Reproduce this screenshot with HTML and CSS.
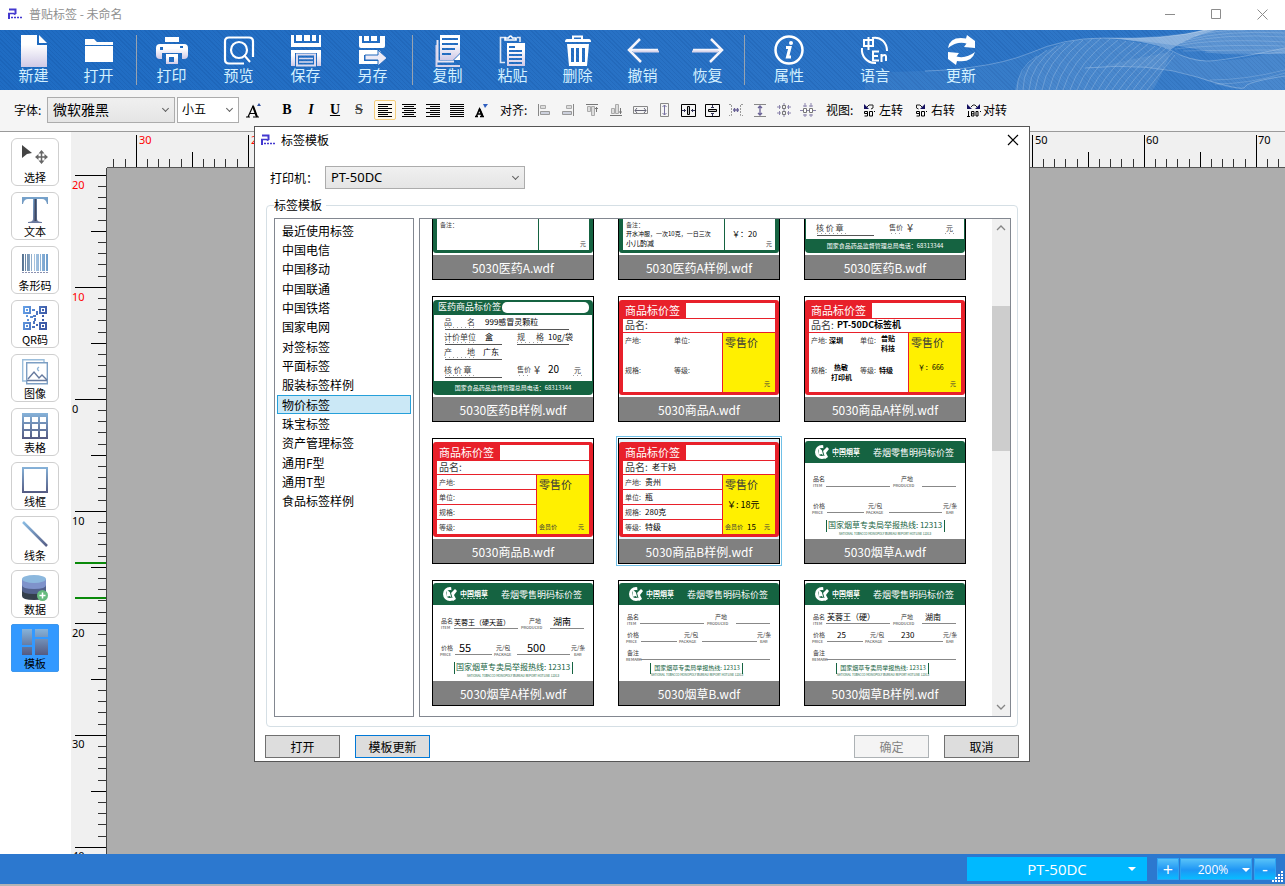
FILE: index.html
```html
<!DOCTYPE html>
<html lang="zh-CN">
<head>
<meta charset="utf-8">
<title>普贴标签 - 未命名</title>
<link rel="stylesheet" href="styles.css">
</head>
<body>
<svg class="defs" width="0" height="0" aria-hidden="true">
  <defs>
    <linearGradient id="g-white" x1="0" y1="0" x2="0" y2="1"><stop offset="0.3" stop-color="#ffffff"/><stop offset="1" stop-color="#cfc9e6"/></linearGradient>
    <linearGradient id="g-steel" x1="0" y1="0" x2="0" y2="1"><stop offset="0" stop-color="#86b3da"/><stop offset="1" stop-color="#545a82"/></linearGradient>
    <linearGradient id="g-tee" x1="0" y1="0" x2="0" y2="1"><stop offset="0" stop-color="#76a3cc"/><stop offset="1" stop-color="#6b7a9e"/></linearGradient>
    <linearGradient id="g-bars" x1="0" y1="0" x2="1" y2="0"><stop offset="0" stop-color="#54708f"/><stop offset="0.5" stop-color="#a9c6e2"/><stop offset="1" stop-color="#6b9bcb"/></linearGradient>
    <linearGradient id="g-qr" x1="0" y1="0" x2="1" y2="0.3"><stop offset="0" stop-color="#66a3ea"/><stop offset="1" stop-color="#3d59a6"/></linearGradient>
    <linearGradient id="g-line" gradientUnits="userSpaceOnUse" x1="0" y1="0" x2="26" y2="26"><stop offset="0" stop-color="#8cc0e8"/><stop offset="1" stop-color="#545a82"/></linearGradient>
  </defs>
  <symbol id="logo" viewBox="0 0 14 12">
    <path d="M1 1.500h6.500V6" fill="none" stroke="#4338cf" stroke-width="2"/>
    <path d="M0 5.500h5.500l2 1" fill="none" stroke="#4338cf" stroke-width="1.500"/>
    <path d="M1 6v5" stroke="#4338cf" stroke-width="2"/>
    <path d="M3 9.500h2M6 9.500h2M9 9.500h2M12 9.500h2" stroke="#4338cf" stroke-width="1.500"/>
  </symbol>
  <symbol id="f-red" viewBox="0 0 160 100">
    <rect y="3" width="160" height="95" rx="3" fill="#e8202a"/>
    <path d="M67 6h89v15H67zM4 22h152v13H4zM4 36h99v59H4z" fill="#fff"/>
    <rect x="104" y="36" width="52" height="59" fill="#fff000"/>
  </symbol>
  <symbol id="f-med-a" viewBox="0 0 160 100">
    <rect y="3" width="160" height="95" rx="3" fill="#156341"/>
    <path d="M4 6h101v89H4zM106 6h50v89h-50z" fill="#fff"/>
  </symbol>
  <symbol id="f-med-b" viewBox="0 0 160 100">
    <rect y="3" width="160" height="95" rx="4" fill="#156341"/>
    <path d="M1 18h158v66H1z" fill="#fff"/>
    <rect x="69" y="5" width="87" height="11" rx="5" fill="#fff"/>
    <path d="M12 32.500h124M12 47.500h57M84 47.500h52M12 62.500h57M12 80.500h57" stroke="#555" fill="none"/>
    <path d="M12 30.500h29M12 45.500h29M84 45.500h26M12 60.500h29M12 78.500h30M86 78.500h12M140 78.500h10" stroke="#777" stroke-dasharray="1 3" fill="none" opacity=".7"/>
  </symbol>
  <symbol id="f-tob" viewBox="0 0 160 100">
    <path d="M0 24V5q0-3 3-3h154q3 0 3 3v19z" fill="#156341"/>
    <circle cx="17" cy="13" r="5.500" fill="none" stroke="#fff" stroke-width="3"/>
    <path d="M18 3l9 6-1 10-7-1z" fill="#156341"/>
    <path d="M14 9l4 3 4-4 2 2-3 4 2 4-3 2-3-5-4 1z" fill="#fff"/>
    <path d="M17 10l2 7" stroke="#156341" fill="none"/>
    <path d="M28 17.500h26" stroke="#fff" stroke-dasharray="2 1" opacity=".6"/>
  </symbol>
</svg>

<header class="titlebar">
  <svg class="logo"><use href="#logo"/></svg>
  <h1 class="titlebar-text">普贴标签 - 未命名</h1>
  <button class="win-btn" aria-label="最小化"><svg width="11" height="11"><path d="M0 5.500h10" stroke="#8c8c8c"/></svg></button>
  <button class="win-btn" aria-label="最大化"><svg width="11" height="11"><path d="M.5.5h9v9h-9z" fill="none" stroke="#8c8c8c"/></svg></button>
  <button class="win-btn" aria-label="关闭"><svg width="11" height="11"><path d="M.5.5l10 10M10.500.5l-10 10" stroke="#8c8c8c"/></svg></button>
</header>

<nav class="toolbar">
  <svg class="waves" viewBox="0 0 420 60" aria-hidden="true">
    <path d="M0 42Q70 42 108 37 140 33 165 23 198 8 238 8 290 8 338 0H420V60H0z" fill="#fff" opacity=".05"/>
    <path d="M150 60Q155 30 198 13 215 8 238 8 280 12 306 20 300 40 288 60z" fill="#fff" opacity=".09"/>
    <path d="M238 8Q300 10 338 0H420V24Q380 24 345 22 300 12 238 8z" fill="#fff" opacity=".18"/>
    <path d="M238 8Q300 10 338 0H352Q325 6 305 20 280 10 238 8z" fill="#fff" opacity=".3"/>
    <path d="M240 36Q290 34 332 47 362 60 385 60H420V18Q380 32 342 31 320 27 305 22 260 30 240 36z" fill="#fff" opacity=".08"/>
    <g fill="none" stroke="#fff" opacity=".25">
      <path d="M60 41Q90 40 108 37 140 33 165 23 198 8 238 8 300 10 342 0M220 38Q285 32 332 47T380 57T420 46M305 20Q325 31 342 31T420 18"/>
    </g>
    <g fill="none" stroke="#fff" opacity=".2">
      <path d="M152 60Q152 38 172 26M158 60Q158 34 182 20M164 60Q166 34 192 16M170 60Q174 33 200 13M177 60Q182 32 209 11M184 60Q190 32 218 10M191 60Q198 32 227 9M198 60Q206 32 236 8M205 60Q214 32 245 9M212 60Q222 33 253 10M219 60Q230 34 261 11M226 60Q238 35 269 12M233 60Q246 36 276 13M240 60Q254 36 283 14M247 60Q262 37 290 16M254 60Q270 37 296 17M261 60Q277 38 301 18M268 60Q284 38 305 20M275 60Q291 40 308 22M282 60Q296 42 310 25"/>
    </g>
    <g fill="none" stroke="#fff" opacity=".16">
      <path d="M330 6Q350 0 380 0M322 10Q360 0 420 3M316 13Q360 3 420 7M312 16Q350 8 420 12M310 19Q350 14 420 16M318 21Q360 20 420 20M340 22Q380 26 420 22M345 50Q380 50 420 40M350 54Q385 54 420 43"/>
    </g>
  </svg>
  <div class="tool-group">
    <button class="tool"><svg class="tool-icon"><path d="M3 0h16v10h10v22H3z" fill="url(#g-white)"/><path d="M21 0l8 8h-8z" fill="#fff"/></svg>新建</button>
    <button class="tool"><svg class="tool-icon"><path d="M2 4h9l3 3h16v3H2z" fill="#fff"/><path d="M2 11h28v16H2z" fill="#fff"/></svg>打开</button>
  </div>
  <div class="tool-group tool-group-wide">
    <button class="tool"><svg class="tool-icon"><path d="M9 2h14v5H9z" fill="#fff"/><path fill-rule="evenodd" d="M4 9h24q4 0 4 4v7q0 4-4 4h-2v-6H6v6H4q-4 0-4-4v-7q0-4 4-4zm20 2v2h3v-2zM4 12v3h3v-3z" fill="url(#g-white)"/><path fill-rule="evenodd" d="M10 19h12v10H10zm3 3v5h5v-5z" fill="url(#g-white)"/></svg>打印</button>
    <button class="tool"><svg class="tool-icon"><path d="M11 28.500H6q-4 0-4-4V6.500q0-4 4-4h20q4 0 4 4V22" fill="none" stroke="#fff" stroke-width="2.200"/><path d="M11 28.500h10" stroke="#fff" stroke-width="2"/><circle cx="16" cy="15" r="8" fill="none" stroke="#fff" stroke-width="2.200"/><path d="M21 20l6 7" stroke="#fff" stroke-width="2"/></svg>预览</button>
    <button class="tool"><svg class="tool-icon"><path d="M1 0h3v8h25V0h2v12H1z" fill="#fff"/><path d="M6 0h6v6H6zM14 0h6v6h-6zM22 0h4v6h-4z" fill="#fff"/><path d="M1 15h30v16h-4V18H5v13H1z" fill="url(#g-white)"/><path d="M7 19.500h18v11H7z" fill="none" stroke="#dedbee" stroke-width="2"/><path d="M9 23.500h14M9 27h14" stroke="#dedbee" stroke-width="1.500"/></svg>保存</button>
    <button class="tool"><svg class="tool-icon"><path d="M2 1h3v7h18V1h5v10q0 2-2 2H4q-2 0-2-2z" fill="#fff"/><path d="M7 1h5v5H7zM14 1h6v5h-6z" fill="#fff"/><path d="M2 15h20l2 2v3H7v6h15v3H2z" fill="#fff"/><path d="M8 20h13v-5l9 8-9 8v-6H8z" fill="#eceaf6" stroke="#2068bd" stroke-width="1"/></svg>另存</button>
  </div>
  <div class="tool-group tool-group-edit">
    <button class="tool"><svg class="tool-icon"><path d="M5.500 5v21.500H22" fill="none" stroke="#e8e6f4" stroke-width="2"/><path d="M4.500 10v21H28" fill="none" stroke="#d8d4ea" stroke-width="2"/><path fill-rule="evenodd" d="M8 0h20v18l-7 7H8zM10 3v2h16V3zm0 5v2h16V8zm0 5v2h13v-2zm0 5v2h9v-2z" fill="url(#g-white)"/><path d="M22 25l6-6v6z" fill="#fff"/></svg>复制</button>
    <button class="tool"><svg class="tool-icon"><path d="M8 27.500H3.500V2.500H9M20 2.500h3V7" fill="none" stroke="#dfe7f4" stroke-width="1.600"/><path d="M8 5h11V3h-3.500q-2-4-4 0H8z" fill="none" stroke="#fff" stroke-width="1.600"/><path fill-rule="evenodd" d="M10 8h18v23H10zM12 11v2h6v-2zm0 4v2h13v-2zm0 4v2h13v-2zm0 4v2h13v-2zm0 4v2h13v-2z" fill="url(#g-white)"/></svg>粘贴</button>
    <button class="tool"><svg class="tool-icon"><path d="M5 4h22q2 0 2 3H3q0-3 2-3z" fill="#fff"/><path d="M11 4V1.500h9V4" fill="none" stroke="#fff" stroke-width="2"/><path fill-rule="evenodd" d="M5 9h22l-2 22H7zM9 13v14h3V13zm5 0v14h3V13zm6 0v14h3V13z" fill="#fff"/></svg>删除</button>
    <button class="tool"><svg class="tool-icon"><path d="M13 4L2 15l12 12M2 15h29" fill="none" stroke="#f4f4fb" stroke-width="2.500"/><path d="M6 16.500h26" stroke="#d9d5ea" stroke-width="2"/></svg>撤销</button>
    <button class="tool"><svg class="tool-icon"><path d="M19 4l11 11-12 12M30 15H1" fill="none" stroke="#f4f4fb" stroke-width="2.500"/><path d="M0 16.500h26" stroke="#d9d5ea" stroke-width="2"/></svg>恢复</button>
  </div>
  <div class="tool-group tool-group-last">
    <button class="tool"><svg class="tool-icon"><circle cx="16" cy="15" r="13.500" fill="none" stroke="#fff" stroke-width="2.500"/><circle cx="18" cy="8" r="2" fill="#fff"/><path d="M13 12.500h4l-2.500 9.500h3.500" fill="none" stroke="#fff" stroke-width="3"/></svg>属性</button>
    <button class="tool"><svg class="tool-icon"><path d="M13 3c9-2 15 5 15 13M3 13c-1 8 5 15 13 15h1" fill="none" stroke="#fff" stroke-width="2"/><path d="M5 5h9v6H5zM9.500 2v13" fill="none" stroke="#fff" stroke-width="2"/><path d="M20 16.500h-6v9h6M14 21h5M22.500 27v-8M22.500 21.500q4-3 4.500 0V26" fill="none" stroke="#fff" stroke-width="2"/></svg>语言</button>
    <button class="tool"><svg class="tool-icon"><path d="M3 13Q5 1 21 3.500L22 0l8 6v7l-11-1 2.500-3.500Q12 6 3 13z" fill="#fff"/><path d="M30 17q-3 11-18 9l-1 4-8-6v-7l11 1-2.500 3.500Q21 24 30 17z" fill="#fff"/></svg>更新</button>
  </div>
</nav>

<section class="format-bar" aria-label="格式">
  <label class="fmt-label" for="font-family">字体:</label>
  <span class="pick pick-font"><select id="font-family"><option>微软雅黑</option></select></span>
  <span class="pick pick-size"><select aria-label="字号"><option>小五</option></select></span>
  <button class="fmt fmt-grow" aria-label="增大字号"><svg class="fi"><path d="M1 15h4M8 15h6M3 15L8 4l4 11M4.500 11.500h6" fill="none" stroke="#000" stroke-width="1.200"/><path d="M8 4l4 11" stroke="#000" stroke-width="2"/><path d="M12 4l2-3 2 3z" fill="#2f4fa0"/></svg></button>
  <button class="fmt fmt-bold" aria-label="粗体">B</button>
  <button class="fmt fmt-italic" aria-label="斜体">I</button>
  <button class="fmt fmt-under" aria-label="下划线">U</button>
  <button class="fmt fmt-strike" aria-label="删除线">S</button>
  <button class="fmt fmt-on" aria-label="左对齐"><svg class="fi"><path d="M1 2.500h14M1 4.500h10M1 6.500h14M1 8.500h10M1 10.500h14M1 12.500h10M1 14.500h14" stroke="#000"/></svg></button>
  <button class="fmt" aria-label="居中"><svg class="fi"><path d="M1 2.500h14M3 4.500h10M1 6.500h14M3 8.500h10M1 10.500h14M3 12.500h10M1 14.500h14" stroke="#000"/></svg></button>
  <button class="fmt" aria-label="右对齐"><svg class="fi"><path d="M1 2.500h14M5 4.500h10M1 6.500h14M5 8.500h10M1 10.500h14M5 12.500h10M1 14.500h14" stroke="#000"/></svg></button>
  <button class="fmt" aria-label="两端对齐"><svg class="fi"><path d="M1 2.500h14M1 4.500h14M1 6.500h14M1 8.500h14M1 10.500h14M1 12.500h14M1 14.500h14" stroke="#000"/></svg></button>
  <button class="fmt" aria-label="文字方向"><svg class="fi"><path d="M2 14.500h3M7 14.500h4M3.500 14l3-7 3 7M4.500 12h4" fill="none" stroke="#000" stroke-width="1.500"/><path d="M6.500 7l3 7" stroke="#000" stroke-width="2"/><path d="M10 2h5l-3 4z" fill="#2f5fc0"/></svg></button>
  <span class="fmt-label fmt-label-align">对齐:</span>
  <button class="fmt" aria-label="靠左"><svg class="fi"><path d="M2.500 2v12" stroke="#888"/><path d="M4.500 3.500h5v3h-5z" fill="#ddd" stroke="#aaa"/><path d="M4.500 9.500h9v3h-9z" fill="#ccd0dc" stroke="#999"/></svg></button>
  <button class="fmt" aria-label="靠右"><svg class="fi"><path d="M13.500 2v12" stroke="#888"/><path d="M6.500 3.500h5v3h-5z" fill="#ddd" stroke="#aaa"/><path d="M2.500 9.500h9v3h-9z" fill="#ccd0dc" stroke="#999"/></svg></button>
  <button class="fmt" aria-label="靠上"><svg class="fi"><path d="M2 2.500h12" stroke="#777"/><path d="M3.500 4.500h3v5h-3zM7.500 4.500h3v9h-3z" fill="#ddd" stroke="#aaa"/><path d="M12.500 5v5M11 6.500h3" stroke="#777"/></svg></button>
  <button class="fmt" aria-label="靠下"><svg class="fi"><path d="M2 13.500h12" stroke="#777"/><path d="M3.500 6.500h3v5h-3zM7.500 2.500h3v9h-3z" fill="#ddd" stroke="#aaa"/><path d="M12.500 6v6M11 10h3" stroke="#777"/></svg></button>
  <button class="fmt" aria-label="等宽"><svg class="fi"><path d="M1.500 4.500h14v7h-14z" fill="none" stroke="#888"/><path d="M3 8.500h11M5 6L3 8.500 5 11M12 6l2 2.500-2 2.500" fill="none" stroke="#667"/></svg></button>
  <button class="fmt" aria-label="等高"><svg class="fi"><path d="M4.500 1.500h8v13h-8z" fill="none" stroke="#888"/><path d="M8.500 3v10M6.500 5l2-2 2 2M6.500 11l2 2 2-2" fill="none" stroke="#7670a0"/></svg></button>
  <button class="fmt" aria-label="水平居中"><svg class="fi"><path d="M1.500 2.500h14v12h-14z" fill="none" stroke="#000" stroke-width="1"/><path d="M7.500 4.500h2v8h-2z" fill="#ccc" stroke="#000"/><path d="M2 8.500h4M15 8.500h-4M4.500 7v3M12.500 7v3" stroke="#335"/></svg></button>
  <button class="fmt" aria-label="垂直居中"><svg class="fi"><path d="M1.500 2.500h14v12h-14z" fill="none" stroke="#000" stroke-width="1"/><path d="M4.500 7.500h8v2h-8z" fill="#ccc" stroke="#000"/><path d="M8.500 3v3M8.500 14v-3M7 5.500h3M7 11.500h3" stroke="#335"/></svg></button>
  <button class="fmt" aria-label="水平等距"><svg class="fi"><path d="M1 2.500h2.500v11H1M15 2.500h-2.500v11H15" fill="none" stroke="#999" stroke-dasharray="2 1"/><path d="M5 8h6M6.500 6v4M9.500 6v4" stroke="#6a6296" stroke-width="1.300"/></svg></button>
  <button class="fmt" aria-label="垂直等距"><svg class="fi"><path d="M2 2.500h12M2 14.500h12" stroke="#888"/><path d="M8 4v9M6 6l2-2 2 2M6 11l2 2 2-2" fill="none" stroke="#6a6296" stroke-width="1.300"/></svg></button>
  <button class="fmt" aria-label="中心对齐"><svg class="fi"><path d="M6.500 3.500h3v3h-3zM6.500 9.500h3v3h-3z" fill="#eee" stroke="#777"/><path d="M1 5h4M11 5h4M1 11h4M11 11h4M3.500 3v4M12.500 3v4M3.500 9v4M12.500 9v4M8 1v2M8 7v2M8 13v2" stroke="#8b84ad"/></svg></button>
  <button class="fmt" aria-label="中心等距"><svg class="fi"><path d="M3.500 6.500h3v4h-3zM9.500 6.500h3v4h-3z" fill="#fff" stroke="#777"/><path d="M0 8.500h3M7 8.500h2M13 8.500h3M5 1v4M11 1v4M5 12v3M11 12v3M3 4h4M9 4h4M3 13h4M9 13h4" stroke="#8b84ad"/></svg></button>
  <span class="fmt-label fmt-label-view">视图:</span>
  <button class="turn"><svg class="turn-icon" viewBox="0 0 14 13"><path d="M1 0v5h5z" fill="#141060"/><path d="M4 3L6 1h4v3L8 5" fill="none" stroke="#222"/><path d="M4.500 9.500h-3v-2h3v4.500h-3M6.500 7.500h3V12h-3z" fill="none" stroke="#000"/><path d="M11 7h1v1h-1z"/></svg>左转</button>
  <button class="turn"><svg class="turn-icon" viewBox="0 0 14 13"><path d="M10 0v5H5z" fill="#141060"/><path d="M7 3L5 1H1.500v3l2 1" fill="none" stroke="#222"/><path d="M4.500 9.500h-3v-2h3v4.500h-3M6.500 7.500h3V12h-3z" fill="none" stroke="#000"/><path d="M11 7h1v1h-1z"/></svg>右转</button>
  <button class="turn"><svg class="turn-icon" viewBox="0 0 14 13"><path d="M0 0v5h5zM13 0v5H8z" fill="#141060"/><path d="M4 3l2-2h2l2 2" fill="none" stroke="#222"/><path d="M1.500 7v5.500M0 12.500h3M4.500 7.500H7V12H4.500zM4.500 9.800H7M9 7.500h2V12H9z" fill="none" stroke="#000"/><path d="M13 7h1v1h-1z"/></svg>对转</button>
</section>

<main class="main">
  <aside class="side">
    <button class="side-btn"><svg class="side-icon"><path d="M0 2l10 8-5 1-5 4z" fill="#444"/><path d="M19.500 9v10M14.500 14h10" stroke="#666" stroke-width="1.500"/><path d="M19.500 7l3 3.500h-6zM19.500 21l3-3.500h-6zM13 14l3.500-3v6zM26 14l-3.500-3v6z" fill="#666"/></svg>选择</button>
    <button class="side-btn"><svg class="side-icon"><path d="M0 0h26v7h-1q-1-5-5-5h-5v20q0 3 5 3v1H6v-1q5 0 5-3V2H6Q2 2 1 7H0z" fill="url(#g-tee)"/><path d="M12.500 2h2v22h-2z" fill="#3e4760"/></svg>文本</button>
    <button class="side-btn"><svg class="side-icon"><path d="M0 3h2v17H0zM3 3h1v17H3zM5 3h3v17H5zM9 3h1v17H9zM12 3h1v17h-1zM14 3h3v17h-3zM18 3h1v17h-1zM20 3h3v17h-3zM24 3h2v17h-2z" fill="url(#g-bars)"/><path d="M0 21.500h26" stroke="#8a90b0" stroke-width="1" stroke-dasharray="2 1"/></svg>条形码</button>
    <button class="side-btn"><svg class="side-icon"><path fill-rule="evenodd" d="M1 1h8v8H1zm2 2v4h4V3zM17 1h8v8h-8zm2 2v4h4V3zM1 17h8v8H1zm2 2v4h4v-4zM17 17h8v8h-8zm2 2v4h4v-4z" fill="url(#g-qr)"/><path d="M4 4h2v2H4zM20 4h2v2h-2zM4 20h2v2H4zM20 20h2v2h-2zM10 4h3v2h-3zM14 6h2v4h-2zM11 10h3v2h-3zM4 10h2v2H4zM8 11h3v2H8zM12 13h2v3h-2zM20 10h2v2h-2zM5 14h2v2H5zM11 16h2v3h-2zM14 19h2v2h-2zM10 21h3v2h-3zM20 14h2v2h-2z" fill="url(#g-qr)"/></svg>QR码</button>
    <button class="side-btn"><svg class="side-icon"><path d="M4 22H.7V.7H22V4" fill="none" stroke="#9bbedc" stroke-width="1.400"/><path d="M4.700 3.700h20.600v21H4.700z" fill="#fff" stroke="#7d9fc4" stroke-width="1.400"/><path d="M6 20l6-7 5 6 3-3 5 5M5 21.500h20" fill="none" stroke="#667a9e" stroke-width="1.400"/><path d="M17 8q-3 2 0 4" fill="none" stroke="#8fb4d8" stroke-width="1.500"/></svg>图像</button>
    <button class="side-btn"><svg class="side-icon"><path fill-rule="evenodd" d="M0 0h26v26H0zM2 4v5h6V4zm8 0v5h6V4zm8 0v5h6V4zM2 11v5h6v-5zm8 0v5h6v-5zm8 0v5h6v-5zM2 18v6h6v-6zm8 0v6h6v-6zm8 0v6h6v-6z" fill="url(#g-steel)"/></svg>表格</button>
    <button class="side-btn"><svg class="side-icon"><path fill-rule="evenodd" d="M0 0h26v26H0zM2 2v22h22V2z" fill="url(#g-steel)"/></svg>线框</button>
    <button class="side-btn"><svg class="side-icon"><path d="M1 1l24 24" stroke="url(#g-line)" stroke-width="2.500"/></svg>线条</button>
    <button class="side-btn"><svg class="side-icon"><path d="M0 4v17q0 4 12 4t12-4V4z" fill="#343f4b"/><path d="M0 4v11q0 4 12 4t12-4V4z" fill="#52618c"/><path d="M0 4v6q0 4 12 4t12-4V4z" fill="#7f93cb"/><ellipse cx="12" cy="4" rx="12" ry="4" fill="#8cb8de"/><circle cx="20.500" cy="20.500" r="5.500" fill="#66bb7e"/><path d="M20.500 17.500v6M17.500 20.500h6" stroke="#fff" stroke-width="1.500"/></svg>数据</button>
    <button class="side-btn side-btn-on"><svg class="side-icon"><path d="M0 0h10v16H0zM13 0h13v8H13zM0 18h10v8H0zM13 10h13v16H13z" fill="url(#g-steel)"/></svg>模板</button>
  </aside>

  <div class="workspace">
    <svg class="ruler-h">
      <defs><pattern id="ticks-h" x="29" y="0" width="112" height="36" patternUnits="userSpaceOnUse"><path d="M.5 3v33M56.500 20v16" stroke="#000"/><path d="M11.500 27v9M22.500 27v9M33.500 27v9M45.500 27v9M67.500 27v9M78.500 27v9M89.500 27v9M101.500 27v9" stroke="#333"/></pattern></defs>
      <rect width="100%" height="36" fill="url(#ticks-h)"/>
      <text class="neg" x="32" y="12">30</text><text class="neg" x="144" y="12">20</text>
      <text x="928" y="12">50</text><text x="1039" y="12">60</text><text x="1151" y="12">70</text>
    </svg>
    <svg class="ruler-v">
      <defs><pattern id="ticks-v" x="0" y="7" width="36" height="112" patternUnits="userSpaceOnUse"><path d="M4 .5h32M20 56.500h16" stroke="#000"/><path d="M27 11.500h9M27 22.500h9M27 33.500h9M27 45.500h9M27 67.500h9M27 78.500h9M27 89.500h9M27 101.500h9" stroke="#333"/></pattern></defs>
      <rect width="36" height="100%" fill="url(#ticks-v)"/>
      <path d="M4 395h32M4 430h32" stroke="#0a8a0a" stroke-width="2"/>
      <text class="neg" x="1" y="21">20</text><text class="neg" x="1" y="133">10</text>
      <text x="1" y="245">0</text><text x="1" y="357">10</text><text x="1" y="469">20</text><text x="1" y="580">30</text><text x="1" y="692">40</text>
    </svg>
    <div class="canvas"></div>
  </div>
</main>

<footer class="status">
  <span class="pick-status"><select aria-label="打印机型号"><option>PT-50DC</option></select></span>
  <button class="zoom-btn" aria-label="放大">+</button>
  <span class="pick-status pick-zoom"><select aria-label="缩放"><option>200%</option></select></span>
  <button class="zoom-btn" aria-label="缩小">-</button>
  <svg class="grip" viewBox="0 0 12 12"><path d="M9 0h2v2H9zM9 3h2v2H9zM6 3h2v2H6zM9 6h2v2H9zM6 6h2v2H6zM3 6h2v2H3zM9 9h2v2H9zM6 9h2v2H6zM3 9h2v2H3zM0 9h2v2H0z" fill="#fff"/></svg>
</footer>

<div class="dialog" role="dialog" aria-labelledby="dlg-title">
  <div class="dlg-title">
    <svg class="logo"><use href="#logo"/></svg>
    <h2 class="dlg-name" id="dlg-title">标签模板</h2>
    <button class="dlg-close" aria-label="关闭"><svg width="12" height="12"><path d="M1 1l10 10M11 1L1 11" stroke="#000" stroke-width="1.200"/></svg></button>
  </div>
  <div class="printer-row">
    <label class="printer-label" for="printer">打印机：</label>
    <span class="pick pick-printer"><select id="printer"><option>PT-50DC</option></select></span>
  </div>
  <fieldset class="templates">
    <legend>标签模板</legend>
    <div class="cats-box">
      <ul class="cats">
        <li>最近使用标签</li><li>中国电信</li><li>中国移动</li><li>中国联通</li><li>中国铁塔</li><li>国家电网</li><li>对签标签</li><li>平面标签</li><li>服装标签样例</li><li class="cat-on">物价标签</li><li>珠宝标签</li><li>资产管理标签</li><li>通用F型</li><li>通用T型</li><li>食品标签样例</li>
      </ul>
    </div>
    <div class="thumb-pane">
      <div class="thumbs">
        <figure class="card">
          <svg class="art" viewBox="0 0 160 100"><use href="#f-med-a"/><text class="t6" x="7" y="72">备注：</text><text class="t6" x="147" y="91">元</text></svg>
          <figcaption>5030医药A.wdf</figcaption>
        </figure>
        <figure class="card">
          <svg class="art" viewBox="0 0 160 100"><use href="#f-med-a"/><text class="t6" x="7" y="72">备注：</text><text class="t6 val" x="7" y="81">开水冲服，一次10克，一日三次</text><text class="t7 val" x="7" y="91">小儿酌减</text><text class="t8 val" x="113" y="82">￥：20</text><text class="t6" x="147" y="91">元</text></svg>
          <figcaption>5030医药A样例.wdf</figcaption>
        </figure>
        <figure class="card">
          <svg class="art" viewBox="0 0 160 100"><use href="#f-med-b"/><text class="t8" x="11" y="76">核 价 章</text><text class="t7" x="84" y="75">售价</text><text class="t11" x="102" y="77">¥</text><text class="t7" x="141" y="76">元</text><text class="t6 inv" x="80" y="93" text-anchor="middle">国家食品药品监督管理总局电话：68313344</text></svg>
          <figcaption>5030医药B.wdf</figcaption>
        </figure>
        <figure class="card">
          <svg class="art" viewBox="0 0 160 100"><use href="#f-med-b"/><text class="t9 inv" x="5" y="13">医药商品标价签</text><text class="t8" x="11" y="28">品</text><text class="t8" x="34" y="28">名</text><text class="t8 val" x="52" y="28">999感冒灵颗粒</text><text class="t8" x="11" y="43">计价单位</text><text class="t8 val" x="52" y="43">盒</text><text class="t8" x="84" y="43">规</text><text class="t8" x="103" y="43">格</text><text class="t8 val" x="115" y="43">10g/袋</text><text class="t8" x="11" y="58">产</text><text class="t8" x="34" y="58">地</text><text class="t8 val" x="50" y="58">广东</text><text class="t8" x="11" y="76">核 价 章</text><text class="t7" x="84" y="75">售价</text><text class="t11" x="101" y="77">¥</text><text class="t10 val" x="115" y="76">20</text><text class="t7" x="141" y="76">元</text><text class="t6 inv" x="80" y="93" text-anchor="middle">国家食品药品监督管理总局电话：68313344</text></svg>
          <figcaption>5030医药B样例.wdf</figcaption>
        </figure>
        <figure class="card">
          <svg class="art" viewBox="0 0 160 100"><use href="#f-red"/><text class="t11 inv" x="6" y="18">商品标价签</text><text class="t10" x="6" y="32">品名:</text><text class="t7" x="6" y="46">产地:</text><text class="t7" x="55" y="46">单位:</text><text class="t7" x="6" y="76">规格:</text><text class="t7" x="55" y="76">等级:</text><text class="t11" x="106" y="50">零售价</text><text class="t6" x="145" y="89">元</text></svg>
          <figcaption>5030商品A.wdf</figcaption>
        </figure>
        <figure class="card">
          <svg class="art" viewBox="0 0 160 100"><use href="#f-red"/><text class="t11 inv" x="6" y="18">商品标价签</text><text class="t10" x="6" y="32">品名:</text><text class="t9 bold" x="32" y="31">PT-50DC标签机</text><text class="t7" x="6" y="46">产地:</text><text class="t7 bold" x="24" y="46">深圳</text><text class="t7" x="55" y="46">单位:</text><text class="t7 bold" x="76" y="44">普贴</text><text class="t7 bold" x="76" y="54">科技</text><text class="t7" x="6" y="76">规格:</text><text class="t7 bold" x="29" y="73">热敏</text><text class="t7 bold" x="26" y="83">打印机</text><text class="t7" x="55" y="76">等级:</text><text class="t7 bold" x="74" y="76">特级</text><text class="t11" x="106" y="50">零售价</text><text class="t7 val" x="113" y="73">￥：666</text><text class="t6" x="145" y="89">元</text></svg>
          <figcaption>5030商品A样例.wdf</figcaption>
        </figure>
        <figure class="card">
          <svg class="art" viewBox="0 0 160 100"><use href="#f-red"/><path d="M4 50.500h100M4 65.500h100M4 80.500h100" stroke="#e8202a"/><text class="t11 inv" x="6" y="18">商品标价签</text><text class="t10" x="6" y="32">品名:</text><text class="t7" x="6" y="46">产地:</text><text class="t7" x="6" y="61">单位:</text><text class="t7" x="6" y="76">规格:</text><text class="t7" x="6" y="91">等级:</text><text class="t11" x="106" y="50">零售价</text><text class="t6" x="106" y="90">会员价</text><text class="t6" x="145" y="90">元</text></svg>
          <figcaption>5030商品B.wdf</figcaption>
        </figure>
        <figure class="card card-on">
          <svg class="art" viewBox="0 0 160 100"><use href="#f-red"/><path d="M4 50.500h100M4 65.500h100M4 80.500h100" stroke="#e8202a"/><text class="t11 inv" x="6" y="18">商品标价签</text><text class="t10" x="6" y="32">品名:</text><text class="t8 val" x="33" y="31">老干妈</text><text class="t7" x="6" y="46">产地:</text><text class="t8 val" x="26" y="46">贵州</text><text class="t7" x="6" y="61">单位:</text><text class="t8 val" x="26" y="61">瓶</text><text class="t7" x="6" y="76">规格:</text><text class="t8 val" x="26" y="76">280克</text><text class="t7" x="6" y="91">等级:</text><text class="t8 val" x="26" y="91">特级</text><text class="t11" x="106" y="50">零售价</text><text class="t9 val" x="108" y="69">￥: 18元</text><text class="t6" x="106" y="90">会员价</text><text class="t8 val" x="128" y="91">15</text><text class="t6" x="145" y="90">元</text></svg>
          <figcaption>5030商品B样例.wdf</figcaption>
        </figure>
        <figure class="card">
          <svg class="art" viewBox="0 0 160 100"><use href="#f-tob"/><text class="t7 inv bold" x="27" y="15">中国烟草</text><text class="t9 inv" x="68" y="17">卷烟零售明码标价签</text><path d="M21 47.500h64M117 47.500h34M22 73.500h37M84 73.500h53" stroke="#888"/><text class="t6" x="8" y="42">品名</text><text class="t4" x="8" y="48">ITEM</text><text class="t6" x="96" y="42">产地</text><text class="t4" x="88" y="48">PRODUCED</text><text class="t6" x="8" y="69">价格</text><text class="t4" x="7" y="75">PRICE</text><text class="t6" x="63" y="69">元/包</text><text class="t4" x="61" y="75">PACKAGE</text><text class="t6" x="138" y="69">元/条</text><text class="t4" x="141" y="75">BAR</text><path d="M21.500 81v12M139.500 81v12" stroke="#156341"/><text class="t8 grn" x="80" y="89" text-anchor="middle">国家烟草专卖局举报热线: 12313</text><text class="t3 grn" x="80" y="96" text-anchor="middle">NATIONAL TOBACCO MONOPOLY BUREAU REPORT HOTLINE 12313</text></svg>
          <figcaption>5030烟草A.wdf</figcaption>
        </figure>
        <figure class="card">
          <svg class="art" viewBox="0 0 160 100"><use href="#f-tob"/><text class="t7 inv bold" x="27" y="15">中国烟草</text><text class="t9 inv" x="68" y="17">卷烟零售明码标价签</text><path d="M21 47.500h64M117 47.500h34M22 73.500h37M84 73.500h53" stroke="#888"/><text class="t6" x="8" y="42">品名</text><text class="t4" x="8" y="48">ITEM</text><text class="t7 val" x="21" y="44">芙蓉王（硬天蓝）</text><text class="t6" x="96" y="42">产地</text><text class="t4" x="88" y="48">PRODUCED</text><text class="t9 val" x="120" y="44">湖南</text><text class="t6" x="8" y="69">价格</text><text class="t4" x="7" y="75">PRICE</text><text class="t11 val" x="26" y="71">55</text><text class="t6" x="63" y="69">元/包</text><text class="t4" x="61" y="75">PACKAGE</text><text class="t11 val" x="94" y="71">500</text><text class="t6" x="138" y="69">元/条</text><text class="t4" x="141" y="75">BAR</text><path d="M21.500 81v12M139.500 81v12" stroke="#156341"/><text class="t8 grn" x="80" y="89" text-anchor="middle">国家烟草专卖局举报热线: 12313</text><text class="t3 grn" x="80" y="96" text-anchor="middle">NATIONAL TOBACCO MONOPOLY BUREAU REPORT HOTLINE 12313</text></svg>
          <figcaption>5030烟草A样例.wdf</figcaption>
        </figure>
        <figure class="card">
          <svg class="art" viewBox="0 0 160 100"><use href="#f-tob"/><text class="t7 inv bold" x="27" y="15">中国烟草</text><text class="t9 inv" x="68" y="17">卷烟零售明码标价签</text><path d="M21 42.500h64M117 42.500h34M22 60.500h36M83 60.500h55M22 78.500h129" stroke="#888"/><text class="t6" x="8" y="38">品名</text><text class="t4" x="8" y="44">ITEM</text><text class="t6" x="96" y="38">产地</text><text class="t4" x="88" y="44">PRODUCED</text><text class="t6" x="8" y="56">价格</text><text class="t4" x="7" y="62">PRICE</text><text class="t6" x="65" y="56">元/包</text><text class="t4" x="60" y="62">PACKAGE</text><text class="t6" x="138" y="56">元/条</text><text class="t4" x="141" y="62">BAR</text><text class="t6" x="8" y="74">备注</text><text class="t4" x="7" y="80">REMARK</text><path d="M31.500 82v11M123.500 82v11" stroke="#156341"/><text class="t6 grn" x="78" y="89" text-anchor="middle">国家烟草专卖局举报热线: 12313</text><text class="t3 grn" x="78" y="95" text-anchor="middle">NATIONAL TOBACCO MONOPOLY BUREAU REPORT HOTLINE 12313</text></svg>
          <figcaption>5030烟草B.wdf</figcaption>
        </figure>
        <figure class="card">
          <svg class="art" viewBox="0 0 160 100"><use href="#f-tob"/><text class="t7 inv bold" x="27" y="15">中国烟草</text><text class="t9 inv" x="68" y="17">卷烟零售明码标价签</text><path d="M21 42.500h64M117 42.500h34M22 60.500h36M83 60.500h55M22 78.500h129" stroke="#888"/><text class="t6" x="8" y="38">品名</text><text class="t4" x="8" y="44">ITEM</text><text class="t8 val" x="22" y="39">芙蓉王（硬）</text><text class="t6" x="96" y="38">产地</text><text class="t4" x="88" y="44">PRODUCED</text><text class="t8 val" x="120" y="39">湖南</text><text class="t6" x="8" y="56">价格</text><text class="t4" x="7" y="62">PRICE</text><text class="t8 val" x="32" y="57">25</text><text class="t6" x="65" y="56">元/包</text><text class="t4" x="60" y="62">PACKAGE</text><text class="t8 val" x="96" y="57">230</text><text class="t6" x="138" y="56">元/条</text><text class="t4" x="141" y="62">BAR</text><text class="t6" x="8" y="74">备注</text><text class="t4" x="7" y="80">REMARK</text><path d="M31.500 82v11M123.500 82v11" stroke="#156341"/><text class="t6 grn" x="78" y="89" text-anchor="middle">国家烟草专卖局举报热线: 12313</text><text class="t3 grn" x="78" y="95" text-anchor="middle">NATIONAL TOBACCO MONOPOLY BUREAU REPORT HOTLINE 12313</text></svg>
          <figcaption>5030烟草B样例.wdf</figcaption>
        </figure>
      </div>
      <div class="scroll" aria-hidden="true">
        <svg class="scroll-arrow" viewBox="0 0 18 18"><path d="M5 11l4-4 4 4" fill="none" stroke="#858585" stroke-width="1.300"/></svg>
        <div class="scroll-thumb"></div>
        <svg class="scroll-arrow scroll-down" viewBox="0 0 18 18"><path d="M5 7l4 4 4-4" fill="none" stroke="#858585" stroke-width="1.300"/></svg>
      </div>
    </div>
  </fieldset>
  <div class="dlg-actions">
    <button class="btn">打开</button>
    <button class="btn btn-default">模板更新</button>
    <button class="btn btn-ok" disabled>确定</button>
    <button class="btn">取消</button>
  </div>
</div>
</body>
</html>
```

FILE: styles.css
```css
* { box-sizing: border-box; }
body {
  margin: 0;
  height: 100vh;
  display: flex;
  flex-direction: column;
  position: relative;
  overflow: hidden;
  background: #f5f5f5;
  color: #000;
  font: 12px/16px "Noto Sans CJK SC", sans-serif;
}
button, select { font: inherit; color: inherit; }
button { border: 0; padding: 0; background: none; }
svg { display: block; flex: none; }
.defs { position: absolute; }
.logo { width: 14px; height: 12px; }

.titlebar { display: flex; align-items: center; height: 30px; padding: 0 0 2px 8px; background: #fff; color: #8f8f8f; flex: none; }
.titlebar-text { flex: 1; margin: 0 0 0 7px; font-size: 12px; font-weight: 400; }
.win-btn { width: 46px; height: 28px; display: flex; align-items: center; justify-content: center; }

.toolbar {
  position: relative;
  display: flex;
  align-items: center;
  flex: none;
  height: 60px;
  padding-left: 1px;
  background:
    repeating-linear-gradient(45deg, rgba(0, 50, 120, 0.12) 0 1px, transparent 1px 3px),
    linear-gradient(90deg, #1f6cc3, #2a73c6 60%, #3078c8);
}
.waves { position: absolute; right: 0; top: 0; width: 420px; height: 60px; overflow: hidden; }
.tool-group { display: flex; position: relative; }
.tool-group + .tool-group { margin-left: 5px; }
.tool-group + .tool-group::before { content: ""; width: 1px; height: 50px; margin: 5px 1px 0 0; background: #98a3b0; }
.tool { width: 65px; height: 60px; padding-top: 5px; display: flex; flex-direction: column; align-items: center; color: #d3f0ff; font-size: 15px; line-height: 22px; }
.tool-icon { width: 32px; height: 32px; margin-bottom: -3px; }
.tool-group-wide .tool { width: 67px; }
.tool-group + .tool-group-edit { margin-left: 6px; }
.tool-group + .tool-group-edit::before { margin-right: 2px; }
.tool-group + .tool-group-last { margin-left: 4px; }
.tool-group-last .tool { width: 86px; }

.format-bar { display: flex; align-items: center; height: 41px; flex: none; padding: 0 0 1px 14px; background: #f5f5f5; }
.fmt-label { flex: none; width: 33px; }
.fmt-label-align { margin-left: 7px; width: 32px; }
.fmt-label-view { margin: 0 5px 0 6px; width: 32px; }
.pick { position: relative; display: block; }
.pick select { appearance: none; display: block; width: 100%; height: 100%; border: 1px solid #acacac; border-radius: 0; padding: 0 5px; background: linear-gradient(#f0f0f0, #e5e5e5); }
.pick::after { content: ""; position: absolute; right: 7px; top: 50%; width: 4px; height: 4px; margin-top: -4px; border: solid #606060; border-width: 0 1px 1px 0; transform: rotate(45deg); pointer-events: none; }
.pick-font { width: 128px; height: 26px; font-size: 14px; }
.pick-size { width: 62px; height: 26px; margin-left: 2px; }
.pick-size select { background: #fff; padding: 0 4px; }
.pick-font select, .pick-size select { padding-bottom: 2px; }
.fmt { width: 24px; height: 20px; display: flex; align-items: center; justify-content: center; flex: none; border-radius: 2px; }
.fi { width: 17px; height: 17px; }
.fmt-grow { margin: 0 10px 0 2px; }
.fmt-bold, .fmt-italic, .fmt-under, .fmt-strike { font: bold 14px/16px "Liberation Serif", serif; }
.fmt-italic { font-style: italic; }
.fmt-under { text-decoration: underline; }
.fmt-strike { text-decoration: line-through; color: #444; }
.fmt-on { margin: 0 1px 0 3px; border: 1px solid #f4cd7c; background: #fdf9f0; width: 22px; }
.turn { display: flex; align-items: center; gap: 2px; margin-right: 12px; }
.turn-icon { width: 14px; height: 13px; }

.main { flex: 1; min-height: 0; display: flex; border-top: 1px solid #9a9a9a; }
.side { width: 71px; flex: none; padding: 6px 12px 0 11px; display: flex; flex-direction: column; gap: 6px; background: #fff; }
.side-btn { flex: none; height: 48px; padding-top: 4px; display: flex; flex-direction: column; align-items: center; border: 1px solid #cfcfcf; border-radius: 6px; background: #fff; font-size: 11px; line-height: 14px; }
.side-icon { width: 27px; height: 27px; }
.side-btn-on { background: #3399ff; border-color: #3c97ee; border-radius: 2px; }
.workspace { flex: 1; min-width: 0; min-height: 0; display: grid; grid-template-columns: 36px 1fr; grid-template-rows: 36px 1fr; background: #f0f0f0; overflow: hidden; }
.ruler-h { grid-column: 2; width: 100%; height: 36px; border-bottom: 1px solid #555; }
.ruler-v { grid-row: 2; width: 36px; height: 100%; min-height: 0; border-right: 1px solid #444; overflow: hidden; }
.ruler-h text, .ruler-v text { font: 11px "Noto Sans", sans-serif; fill: #000; }
.ruler-h .neg, .ruler-v .neg { fill: #f00; }
.canvas { background: #adadad; }

.status { display: flex; align-items: center; justify-content: flex-end; flex: none; height: 32px; border-bottom: 2px solid #b4b4b4; background: #2c78cf; color: #fff; position: relative; padding-right: 9px; }
.pick-status { position: relative; width: 180px; height: 24px; margin-right: 10px; font: 15px/24px "Open Sans", sans-serif; }
.pick-status select { appearance: none; display: block; width: 100%; height: 100%; border: 0; padding: 0; background: #00b9ff; text-align: center; text-align-last: center; }
.pick-status::after { content: ""; position: absolute; right: 11px; top: 10px; border: solid transparent; border-width: 4px 4px 0; border-top-color: #fff; pointer-events: none; }
.pick-zoom { width: 72px; height: 22px; margin: 0 2px 0 1px; font-size: 12px; line-height: 22px; }
.pick-zoom::after { right: 2px; }
.pick-zoom select { padding-right: 6px; }
.pick-zoom select, .zoom-btn { border: 1px solid #2ea3f2; background: linear-gradient(#58c2f8, #1e96f5 55%, #08bcff); }
.zoom-btn { width: 22px; height: 22px; font: 18px/18px "Open Sans", sans-serif; }
.grip { position: absolute; right: 1px; bottom: 1px; width: 12px; height: 12px; }

.dialog { position: absolute; left: 254px; top: 126px; width: 776px; border: 1px solid #555; background: #fff; padding: 0 10px 3px; }
.dlg-title { display: flex; align-items: center; height: 26px; margin-left: -4px; }
.dlg-name { flex: 1; margin: 0 0 0 6px; font-size: 12px; font-weight: 400; }
.dlg-close { width: 12px; height: 12px; }
.printer-row { display: flex; align-items: center; padding: 13px 0 8px 5px; }
.printer-label { width: 55px; }
.pick-printer { width: 200px; height: 23px; font: 13px/21px "Noto Sans", sans-serif; }
.templates { display: flex; gap: 5px; margin: 0 1px; padding: 5px 6px 9px 7px; border: 1px solid #d5dfe5; border-radius: 4px; min-width: 0; }
.templates legend { padding: 0 4px 0 0; }
.cats-box { width: 140px; flex: none; padding: 2px; border: 1px solid #828790; }
.cats { list-style: none; margin: 0; padding: 0; height: 290px; display: grid; grid-template-rows: repeat(15, 1fr); }
.cats li { padding-left: 4px; display: flex; align-items: center; border: 1px solid transparent; line-height: 16px; }
.cats .cat-on { background: #cbe8f6; border: 1px dotted #26709a; outline: 1px solid #26a0da; outline-offset: -1px; }
.thumb-pane { flex: 1; display: flex; height: 499px; overflow: hidden; border: 1px solid #828790; }
.thumbs { flex: 1; display: grid; grid-template-columns: repeat(3, 162px); gap: 16px 24px; align-content: end; padding: 0 0 10px 12px; }
.card { margin: 0; border: 1px solid #000; background: #fff; }
.card-on { background: #e5f3fb; outline: 1px solid #70c0e7; outline-offset: 1px; }
.art { width: 100%; height: 100px; }
.art text { font-family: "Noto Sans CJK SC", sans-serif; fill: #3a3a3a; }
.art .val, .art .bold { fill: #000; }
.art .bold { font-weight: 700; }
.art .inv { fill: #fff; }
.art .grn { fill: #156341; }
.art .t3 { font-size: 3px; }
.art .t4 { font-size: 4px; }
.art .t6 { font-size: 6px; }
.art .t7 { font-size: 7px; }
.art .t8 { font-size: 8px; }
.art .t9 { font-size: 9px; }
.art .t10 { font-size: 10px; }
.art .t11 { font-size: 11px; }
.card figcaption { height: 24px; background: #808080; color: #fff; font-size: 12px; line-height: 25px; text-align: center; }
.scroll { width: 18px; flex: none; display: flex; flex-direction: column; background: #f0f0f0; }
.scroll-arrow { width: 18px; height: 18px; }
.scroll-thumb { height: 145px; margin-top: 69px; background: #cdcdcd; }
.scroll-down { margin-top: auto; }
.dlg-actions { display: flex; gap: 15px; margin-top: 8px; }
.btn { width: 75px; height: 23px; border: 1px solid #707070; background: #ddd; }
.btn-default { border-color: #0078d7; }
.btn-ok { margin-left: auto; border-color: #adb2b5; background: #f4f4f4; color: #838383; }
```
